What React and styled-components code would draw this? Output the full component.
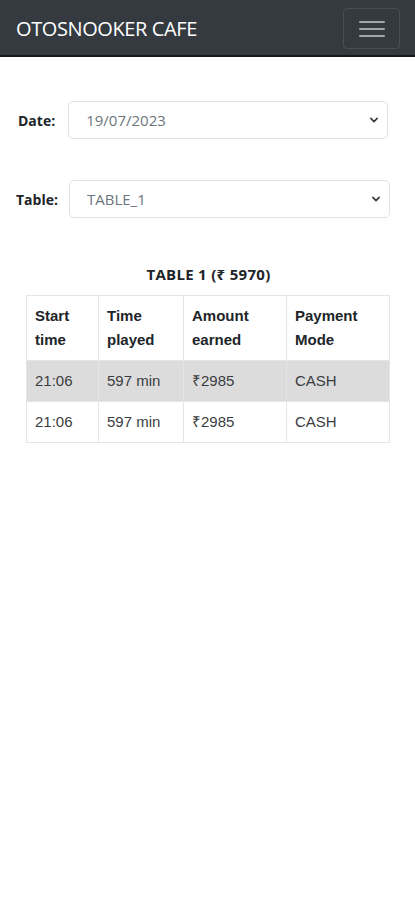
import React from "react";
import styled, { createGlobalStyle } from "styled-components";

const Global = createGlobalStyle`
  html, body { margin: 0; padding: 0; background: #fff; }
  body { font-family: "Open Sans", "Noto Sans", sans-serif; color: #212529; }
  * { box-sizing: border-box; }
`;

const NavBar = styled.header`
  height: 57px;
  background: #343a40;
  border-bottom: 2px solid #16181b;
  display: flex;
  align-items: center;
  justify-content: space-between;
  padding: 0 15px 0 16px;
`;

const Brand = styled.div`
  color: #fff;
  font-family: "Open Sans", sans-serif;
  font-size: 20px;
  letter-spacing: -0.4px;
  margin-top: 2px;
`;

const Toggler = styled.button`
  width: 57px;
  height: 41px;
  margin-top: 2px;
  border: 1px solid rgba(255, 255, 255, 0.1);
  border-radius: 4px;
  background: transparent;
  display: flex;
  flex-direction: column;
  align-items: center;
  justify-content: center;
  gap: 5px;
  padding: 0;
`;

const Bar = styled.span`
  width: 26px;
  height: 2px;
  background: rgba(255, 255, 255, 0.55);
  border-radius: 1px;
`;

const Main = styled.main`
  padding-top: 44px;
`;

const FormRow = styled.div`
  display: flex;
  align-items: center;
  gap: ${(p) => p.$gap}px;
  padding: 0 ${(p) => p.$right}px 0 ${(p) => p.$left}px;
  margin-bottom: ${(p) => p.$mb}px;
`;

const Label = styled.label`
  font-weight: 700;
  font-size: 14px;
  color: #212529;
`;

const SelectBox = styled.div`
  flex: 1;
  height: 38px;
  border: 1px solid #dee2e6;
  border-radius: 5px;
  display: flex;
  align-items: center;
  justify-content: space-between;
  padding: 0 8px 0 17px;
  font-size: 15px;
  color: #6c757d;
`;

const Title = styled.h3`
  margin: 0 0 11px;
  text-align: center;
  font-size: 15px;
  letter-spacing: 0.3px;
  font-weight: 700;
  padding-left: 2px;
  color: #212529;
`;

const TableWrap = styled.div`
  padding: 0 25px 0 26px;
`;

const Table = styled.table`
  width: 100%;
  border-collapse: collapse;
  font-family: "Liberation Sans", Arial, sans-serif;
  font-size: 15px;
  color: #212529;
`;

const Th = styled.th`
  text-align: left;
  font-weight: 700;
  vertical-align: top;
  line-height: 24px;
  padding: 8px 8px;
  border: 1px solid #e3e6e9;
  width: ${(p) => p.$w}px;
`;

const Tr = styled.tr`
  background: ${(p) => (p.$shade ? "#dcdcdc" : "#fff")};
`;

const Td = styled.td`
  padding: 8px 8px;
  line-height: 24px;
  border: 1px solid #e3e6e9;
  color: #3a3d40;
`;

function Chevron() {
  return (
    <svg width="10" height="10" viewBox="0 0 16 16" fill="none">
      <path d="M3 5.5l5 5 5-5" stroke="#343a40" strokeWidth="2.6" strokeLinecap="round" strokeLinejoin="round" />
    </svg>
  );
}

const rows = [
  { start: "21:06", played: "597 min", amount: "₹2985", mode: "CASH" },
  { start: "21:06", played: "597 min", amount: "₹2985", mode: "CASH" },
];

export default function App() {
  return (
    <>
      <Global />
      <NavBar>
        <Brand>OTOSNOOKER CAFE</Brand>
        <Toggler aria-label="menu">
          <Bar />
          <Bar />
          <Bar />
        </Toggler>
      </NavBar>
      <Main>
        <FormRow $left={18} $right={27} $gap={13} $mb={41}>
          <Label>Date:</Label>
          <SelectBox>
            <span>19/07/2023</span>
            <Chevron />
          </SelectBox>
        </FormRow>
        <FormRow $left={16} $right={25} $gap={11} $mb={46}>
          <Label>Table:</Label>
          <SelectBox>
            <span>TABLE_1</span>
            <Chevron />
          </SelectBox>
        </FormRow>
        <Title>TABLE 1 (₹ 5970)</Title>
        <TableWrap>
          <Table>
            <thead>
              <tr>
                <Th $w={72}>Start time</Th>
                <Th $w={85}>Time played</Th>
                <Th $w={103}>Amount earned</Th>
                <Th>Payment Mode</Th>
              </tr>
            </thead>
            <tbody>
              {rows.map((r, i) => (
                <Tr key={i} $shade={i === 0}>
                  <Td>{r.start}</Td>
                  <Td>{r.played}</Td>
                  <Td>{r.amount}</Td>
                  <Td>{r.mode}</Td>
                </Tr>
              ))}
            </tbody>
          </Table>
        </TableWrap>
      </Main>
    </>
  );
}
